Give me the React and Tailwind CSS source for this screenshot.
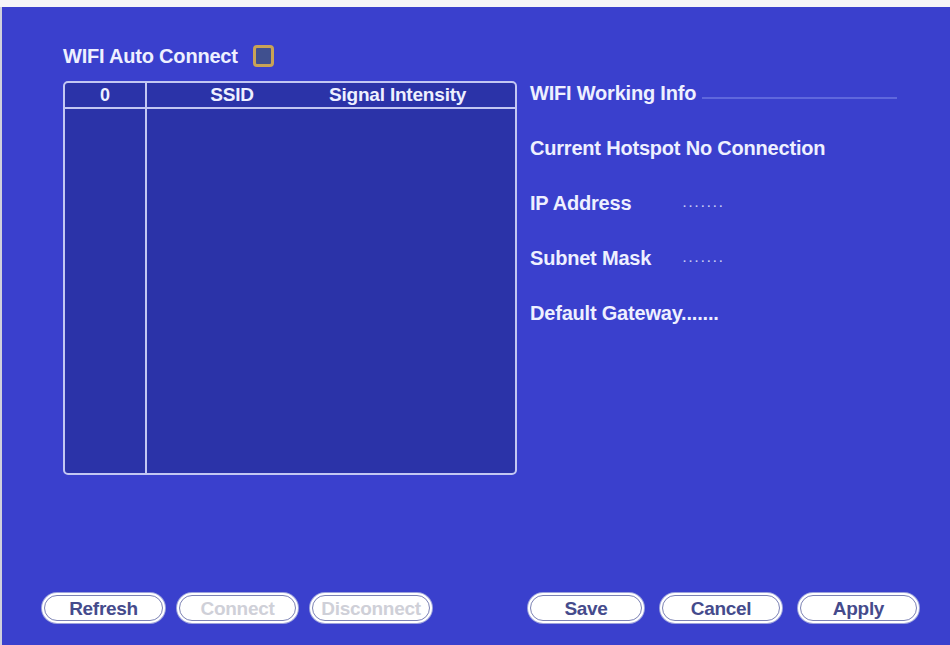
const font = { fontFamily: '"Liberation Sans", Arial, sans-serif' };

function PillButton({ label, width, disabled }) {
  return (
    <div
      className={`rounded-full bg-white p-[2px] shadow-[0_0_0_1px_#9da3dc] ${width}`}
    >
      <div className="h-[26px] rounded-full border border-[#7c82b4] bg-white flex items-center justify-center">
        <span
          className={`text-[19px] font-bold tracking-[-0.3px] leading-none ${
            disabled ? "text-[#cfd0d8]" : "text-[#454b8c]"
          }`}
        >
          {label}
        </span>
      </div>
    </div>
  );
}

function InfoRow({ label, value, small }) {
  return (
    <div className="h-[24px] flex items-center">
      <span className="w-[153px] shrink-0">{label}</span>
      <span className={small ? "text-[11px] tracking-[3px] text-[#c9cdf4]" : ""}>{value}</span>
    </div>
  );
}

export default function App() {
  return (
    <div
      className="w-[950px] h-[645px] bg-white flex flex-col overflow-hidden"
      style={font}
    >
      <div className="h-[7px] bg-[#f5f5f8]" />
      <div className="flex-1 flex">
        <div className="w-[2px] bg-[#cfd0dc]" />
        <div className="flex-1 bg-[#3a40cd] flex flex-col text-[#eef0ff] font-bold tracking-[-0.2px]">
          <div className="flex pl-[61px] pt-[38px]">
            {/* left column */}
            <div className="flex flex-col">
              <div className="h-[22px] flex items-center gap-[15px] text-[20px]">
                <span>WIFI Auto Connect</span>
                <div className="w-[21px] h-[22px] rounded-[4px] border-[3px] border-[#c9a356] bg-[#40508f]" />
              </div>
              <div className="mt-[14px] w-[454px] h-[394px] rounded-[5px] border-2 border-[#c3c7f3] bg-[#2b33a8] flex">
                <div className="w-[82px] border-r-2 border-[#c3c7f3] flex flex-col">
                  <div className="h-[26px] border-b-2 border-[#c3c7f3] flex items-center justify-center text-[18px]">
                    0
                  </div>
                </div>
                <div className="flex-1 flex flex-col">
                  <div className="h-[26px] border-b-2 border-[#c3c7f3] flex items-center text-[19px]">
                    <span className="w-[170px] text-center">SSID</span>
                    <span className="pl-[12px]">Signal Intensity</span>
                  </div>
                </div>
              </div>
            </div>
            {/* right column */}
            <div className="ml-[13px] mt-[36px] flex flex-col gap-[31px] text-[20px]">
              <div className="h-[24px] flex items-center">
                <span>WIFI Working Info</span>
                <div className="ml-[6px] mt-[10px] w-[195px] h-[2px] bg-[#5f67dc]" />
              </div>
              <div className="h-[24px] flex items-center">Current Hotspot No Connection</div>
              <InfoRow label="IP Address" value="......." small />
              <InfoRow label="Subnet Mask" value="......." small />
              <div className="h-[24px] flex items-center">Default Gateway.......</div>
            </div>
          </div>

          <div className="mt-auto mb-[22px] flex justify-between pl-[40px] pr-[31px]">
            <div className="flex gap-[12px]">
              <PillButton label="Refresh" width="w-[123px]" />
              <PillButton label="Connect" width="w-[121px]" disabled />
              <PillButton label="Disconnect" width="w-[122px]" disabled />
            </div>
            <div className="flex gap-[16px]">
              <PillButton label="Save" width="w-[116px]" />
              <PillButton label="Cancel" width="w-[122px]" />
              <PillButton label="Apply" width="w-[121px]" />
            </div>
          </div>
        </div>
      </div>
    </div>
  );
}
